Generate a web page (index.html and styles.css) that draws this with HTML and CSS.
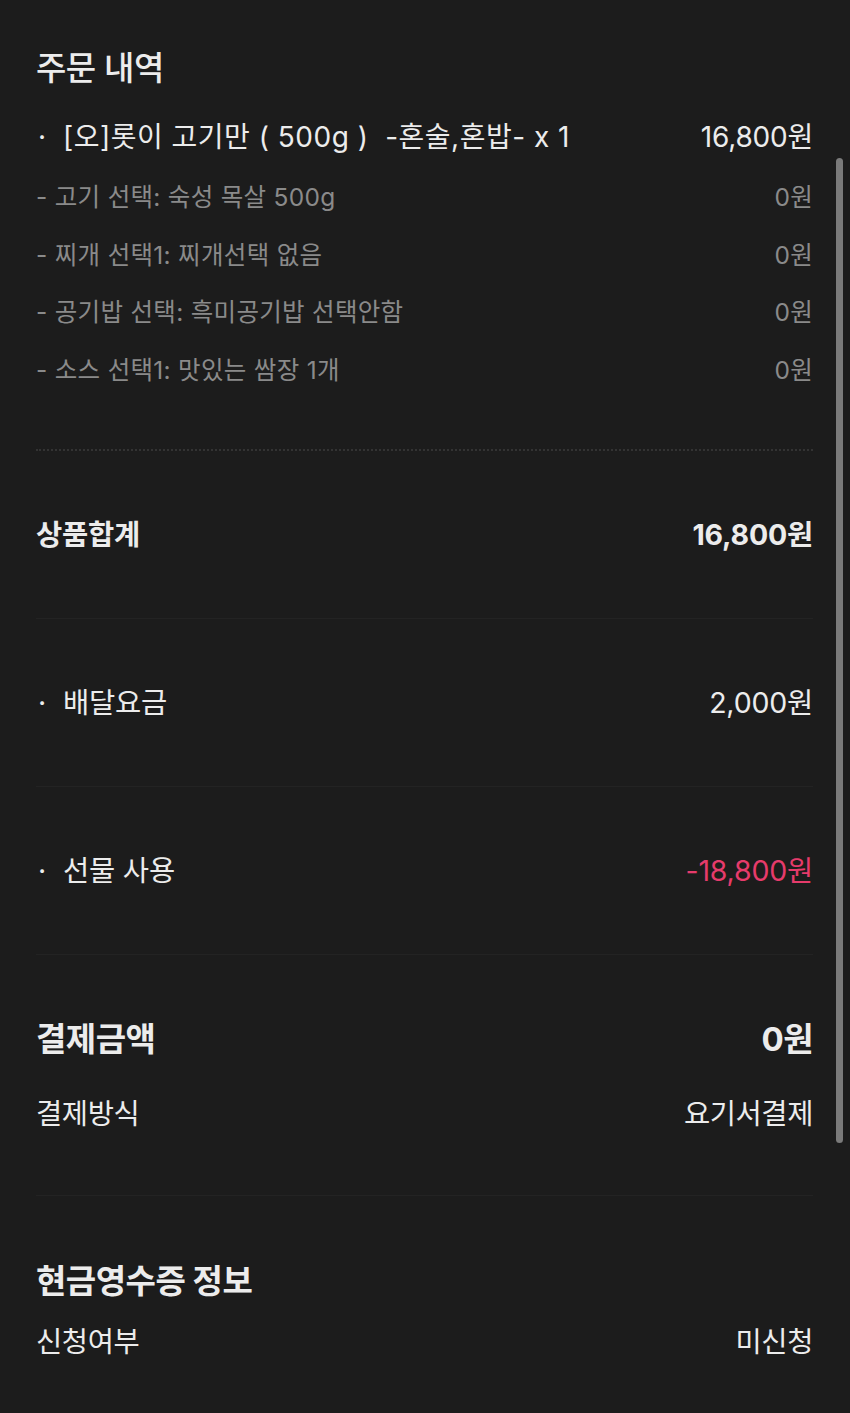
FILE: index.html
```html
<!DOCTYPE html>
<html>
<head>
  <title>주문 상세</title>
  <link rel="stylesheet" href="styles.css">
</head>
<body>
  <div class="page">
    <section class="order">
      <h2 class="title">주문 내역</h2>

      <div class="row item">
        <span class="label"><span class="dot">·</span>[오]롯이 고기만 ( 500g )  -혼술,혼밥- x 1</span>
        <span class="price">16,800원</span>
      </div>

      <div class="options">
        <div class="row option">
          <span>- 고기 선택: 숙성 목살 500g</span>
          <span>0원</span>
        </div>
        <div class="row option">
          <span>- 찌개 선택1: 찌개선택 없음</span>
          <span>0원</span>
        </div>
        <div class="row option">
          <span>- 공기밥 선택: 흑미공기밥 선택안함</span>
          <span>0원</span>
        </div>
        <div class="row option">
          <span>- 소스 선택1: 맛있는 쌈장 1개</span>
          <span>0원</span>
        </div>
      </div>
    </section>

    <div class="dotted"></div>

    <div class="row summary strong">
      <span>상품합계</span>
      <span>16,800원</span>
    </div>

    <div class="row summary">
      <span class="label"><span class="dot">·</span>배달요금</span>
      <span>2,000원</span>
    </div>

    <div class="row summary">
      <span class="label"><span class="dot">·</span>선물 사용</span>
      <span class="minus">-18,800원</span>
    </div>

    <section class="block pay">
      <div class="row heading">
        <span>결제금액</span>
        <span>0원</span>
      </div>
      <div class="row detail">
        <span>결제방식</span>
        <span>요기서결제</span>
      </div>
    </section>

    <section class="block receipt">
      <div class="row heading">
        <span>현금영수증 정보</span>
      </div>
      <div class="row detail">
        <span>신청여부</span>
        <span>미신청</span>
      </div>
    </section>
  </div>

  <div class="scrollbar"></div>
</body>
</html>
```

FILE: styles.css
```css
body {
  margin: 0;
  background-color: #1c1c1c;
  color: #ececec;
  font-family: Inter, "Noto Sans CJK KR", sans-serif;
}

.page {
  padding: 0 37px 0 36px;
}

.row {
  display: flex;
  justify-content: space-between;
  align-items: center;
  white-space: pre;
}

.title {
  margin: 0;
  padding-top: 48px;
  font-size: 33px;
  line-height: 40px;
  font-weight: 500;
  letter-spacing: -0.5px;
}

.item {
  margin-top: 29px;
  font-size: 28px;
  line-height: 40px;
  letter-spacing: 0.5px;
}

.item .price {
  letter-spacing: -0.2px;
}

.dot {
  display: inline-block;
  width: 27px;
  padding-left: 2px;
  box-sizing: border-box;
}

.options {
  margin-top: 12px;
}

.option {
  font-size: 24.5px;
  line-height: 57.5px;
  color: #8a8a8a;
  letter-spacing: 0.3px;
}

.dotted {
  margin-top: 50px;
  border-top: 2px dotted #333;
}

.summary {
  height: 168px;
  box-sizing: border-box;
  padding-bottom: 5px;
  font-size: 28.5px;
  border-bottom: 1px solid #232323;
  letter-spacing: -0.2px;
}

.summary.strong {
  font-weight: 700;
}

.minus {
  color: #e63b6b;
}

.block {
  border-bottom: 1px solid #232323;
}

.pay {
  padding: 62px 0 64px;
}

.receipt {
  padding: 63px 0 40px;
  border-bottom: none;
}

.heading {
  font-size: 33px;
  line-height: 44px;
  font-weight: 700;
  letter-spacing: -0.5px;
}

.detail {
  margin-top: 36px;
  font-size: 28.5px;
  line-height: 34px;
  letter-spacing: -0.4px;
}

.receipt .detail {
  margin-top: 22px;
}

.scrollbar {
  position: absolute;
  top: 158px;
  left: 836px;
  width: 7px;
  height: 985px;
  border-radius: 4px;
  background-color: #7a7a7a;
}
```
